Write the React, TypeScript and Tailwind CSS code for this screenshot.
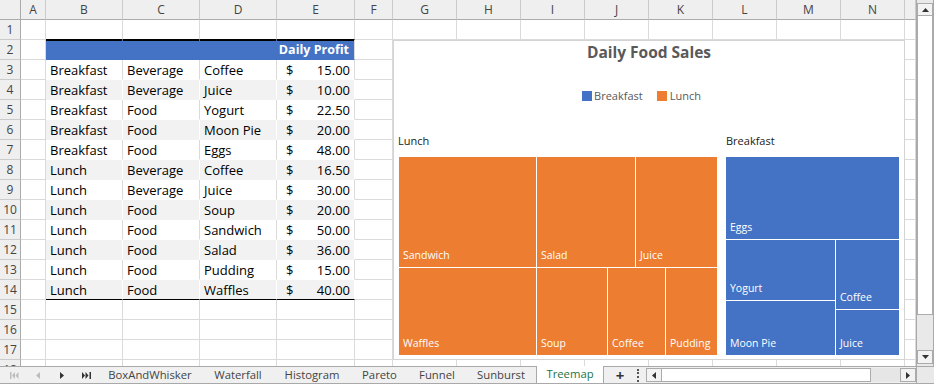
import React from "react"

const LETTERS = ["", "A", "B", "C", "D", "E", "F", "G", "H", "I", "J", "K", "L", "M", "N", ""]

const rows = [
  ["Breakfast", "Beverage", "Coffee", "15.00"],
  ["Breakfast", "Beverage", "Juice", "10.00"],
  ["Breakfast", "Food", "Yogurt", "22.50"],
  ["Breakfast", "Food", "Moon Pie", "20.00"],
  ["Breakfast", "Food", "Eggs", "48.00"],
  ["Lunch", "Beverage", "Coffee", "16.50"],
  ["Lunch", "Beverage", "Juice", "30.00"],
  ["Lunch", "Food", "Soup", "20.00"],
  ["Lunch", "Food", "Sandwich", "50.00"],
  ["Lunch", "Food", "Salad", "36.00"],
  ["Lunch", "Food", "Pudding", "15.00"],
  ["Lunch", "Food", "Waffles", "40.00"],
]

const tabs = [
  { name: "BoxAndWhisker", w: "w-[106px]" },
  { name: "Waterfall", w: "w-[70px]" },
  { name: "Histogram", w: "w-[78px]" },
  { name: "Pareto", w: "w-[57px]" },
  { name: "Funnel", w: "w-[58px]" },
  { name: "Sunburst", w: "w-[70px]" },
]

function Cell({ r, c }: { r: number; c: number }) {
  const inTable = c >= 2 && c <= 5
  if (inTable && r === 1) {
    return <div className="bg-white border-r border-r-[#dadada] border-b border-b-black" />
  }
  if (inTable && r === 2) {
    return (
      <div
        className={
          "bg-[#4472c4] border-b border-b-[#4472c4] shadow-[inset_0_1px_0_#000] flex items-end justify-end pr-[5px] " +
          (c === 5 ? "border-r border-r-[#dadada]" : "border-r border-r-[#4472c4]")
        }
      >
        {c === 5 && (
          <span className="text-white font-bold text-[12.5px] leading-[17px] pb-[1px] whitespace-nowrap">Daily Profit</span>
        )}
      </div>
    )
  }
  if (inTable && r >= 3 && r <= 14) {
    const d = rows[r - 3]
    const gray = r % 2 === 0
    const base = gray
      ? "bg-[#f2f2f2] border-r border-r-white border-b " + (r === 14 ? "border-b-black" : "border-b-[#f2f2f2]")
      : "bg-white border-r border-r-[#dadada] border-b border-b-white"
    if (c === 5) {
      return (
        <div className={base + " flex items-end justify-between pl-[9px] pr-[4px] text-[13px] leading-[17px] text-black"}>
          <span>$</span>
          <span>{d[3]}</span>
        </div>
      )
    }
    return (
      <div className={base + " flex items-end pl-[4px] text-[13px] leading-[17px] text-black whitespace-nowrap"}>
        <span>{d[c - 2]}</span>
      </div>
    )
  }
  return <div className="bg-white border-r border-b border-[#dadada]" />
}

function Sheet() {
  const cells: React.ReactNode[] = []
  LETTERS.forEach((l, i) =>
    cells.push(
      <div
        key={"h" + i}
        className={
          i === 0
            ? "bg-[#efefef] border-r border-r-[#ababab] border-b border-b-[#ababab]"
            : "bg-[#efefef] border-r border-r-[#cbcbcb] border-b border-b-[#ababab] flex items-center justify-center text-[12px] text-[#444]"
        }
      >
        {l}
      </div>
    )
  )
  for (let r = 1; r <= 18; r++) {
    cells.push(
      <div
        key={"r" + r}
        className="bg-[#efefef] border-r border-r-[#ababab] border-b border-b-[#cbcbcb] flex items-center justify-center text-[12px] text-[#444]"
      >
        {r}
      </div>
    )
    for (let c = 1; c <= 15; c++) cells.push(<Cell key={r + "-" + c} r={r} c={c} />)
  }
  return (
    <div className="relative h-[366px] w-[916px] overflow-hidden">
      <div className="grid grid-cols-[21px_25px_77px_77px_77px_78px_38px_repeat(8,64px)_11px] auto-rows-[20px]">
        {cells}
      </div>
      <Chart />
    </div>
  )
}

function Tile({ label, className }: { label: string; className: string }) {
  return (
    <div className={className + " flex items-end pl-[4px] pb-[5px] text-white text-[10.5px] leading-[14px] whitespace-nowrap overflow-hidden"}>
      {label}
    </div>
  )
}

function Chart() {
  return (
    <div className="absolute left-[393px] top-[40px] w-[512px] h-[320px] bg-white border border-[#d4d4d4] flex flex-col">
      <div className="pt-[1px] text-center text-[15.5px] font-bold leading-[20px] text-[#595959]">Daily Food Sales</div>
      <div className="mt-[27px] flex items-center justify-center pr-[15px] h-[14px] text-[11px] text-[#595959]">
        <span className="w-[10px] h-[10px] bg-[#4472c4] mr-[2px]" />
        <span>Breakfast</span>
        <span className="w-[10px] h-[10px] bg-[#ed7d31] ml-[14px] mr-[3px]" />
        <span>Lunch</span>
      </div>
      <div className="mt-[31px] flex pl-[5px] gap-[9px]">
        <div className="flex flex-col w-[318px]">
          <div className="h-[14px] text-[11px] leading-[14px] text-[#1a1a1a] -ml-[1px]">Lunch</div>
          <div className="mt-[9px] h-[198px] flex gap-px">
            <div className="w-[137px] flex flex-col gap-px">
              <Tile label="Sandwich" className="h-[110px] bg-[#ed7d31]" />
              <Tile label="Waffles" className="flex-1 bg-[#ed7d31]" />
            </div>
            <div className="flex-1 flex flex-col gap-px">
              <div className="h-[110px] flex gap-px">
                <Tile label="Salad" className="w-[98px] bg-[#ed7d31]" />
                <Tile label="Juice" className="flex-1 bg-[#ed7d31]" />
              </div>
              <div className="flex-1 flex gap-px">
                <Tile label="Soup" className="w-[70px] bg-[#ed7d31]" />
                <Tile label="Coffee" className="w-[57px] bg-[#ed7d31]" />
                <Tile label="Pudding" className="flex-1 bg-[#ed7d31]" />
              </div>
            </div>
          </div>
        </div>
        <div className="flex flex-col w-[173px]">
          <div className="h-[14px] text-[11px] leading-[14px] text-[#1a1a1a]">Breakfast</div>
          <div className="mt-[9px] h-[198px] flex flex-col gap-px">
            <Tile label="Eggs" className="h-[82px] bg-[#4472c4]" />
            <div className="flex-1 flex gap-px">
              <div className="w-[109px] flex flex-col gap-px">
                <Tile label="Yogurt" className="h-[60px] bg-[#4472c4]" />
                <Tile label="Moon Pie" className="flex-1 bg-[#4472c4]" />
              </div>
              <div className="flex-1 flex flex-col gap-px">
                <Tile label="Coffee" className="h-[69px] bg-[#4472c4]" />
                <Tile label="Juice" className="flex-1 bg-[#4472c4]" />
              </div>
            </div>
          </div>
        </div>
      </div>
    </div>
  )
}

function VScroll() {
  return (
    <div className="w-[18px] h-[366px] bg-[#e9e9e9] border-l border-l-[#a9a9a9] border-r border-r-[#a9a9a9] flex flex-col pt-[3px] pb-[2px]">
      <div className="h-[13px] border border-[#ababab] bg-[#f3f3f3] flex items-center justify-center">
        <svg width="7" height="4" viewBox="0 0 7 4"><path d="M3.5 0 L7 4 L0 4Z" fill="#333" /></svg>
      </div>
      <div className="h-[299px] border border-[#ababab] border-t-0 bg-white" />
      <div className="flex-1" />
      <div className="h-[14px] border border-[#ababab] bg-[#f3f3f3] flex items-center justify-center">
        <svg width="7" height="4" viewBox="0 0 7 4"><path d="M0 0 L7 0 L3.5 4Z" fill="#333" /></svg>
      </div>
    </div>
  )
}

function TabBar() {
  return (
    <div className="flex h-[18px] border-t border-t-[#a9a9a9] border-b border-b-[#a9a9a9] bg-[#f0f0f0]">
      <div className="w-[97px] flex items-center">
        <div className="w-[28px] flex justify-center">
          <svg width="9" height="7" viewBox="0 0 9 7" fill="#bdbdbd">
            <rect x="0" y="0" width="1.5" height="7" />
            <path d="M5 0 L2 3.5 L5 7Z M8.5 0 L5.5 3.5 L8.5 7Z" />
          </svg>
        </div>
        <div className="w-[20px] flex justify-center">
          <svg width="4" height="7" viewBox="0 0 4 7"><path d="M4 0 L0 3.5 L4 7Z" fill="#bdbdbd" /></svg>
        </div>
        <div className="w-[27px] flex justify-center">
          <svg width="4" height="7" viewBox="0 0 4 7"><path d="M0 0 L4 3.5 L0 7Z" fill="#333" /></svg>
        </div>
        <div className="w-[22px] flex justify-center">
          <svg width="9" height="7" viewBox="0 0 9 7" fill="#333">
            <path d="M0 0 L3 3.5 L0 7Z M3.5 0 L6.5 3.5 L3.5 7Z" />
            <rect x="7.5" y="0" width="1.5" height="7" />
          </svg>
        </div>
      </div>
      {tabs.map((t) => (
        <div key={t.name} className={t.w + " flex items-center justify-center text-[11.3px] text-[#444] whitespace-nowrap"}>
          {t.name}
        </div>
      ))}
      <div className="w-[68px] -mt-px bg-white border-x border-x-[#a9a9a9] flex items-center justify-center text-[11.3px] text-[#217346]">
        Treemap
      </div>
      <div className="w-[32px] flex items-center justify-center text-[15px] font-bold text-[#333] leading-none">+</div>
      <div className="w-[10px] flex items-center">
        <div className="ml-[1px] h-[13px] border-l-2 border-dotted border-l-[#555]" />
      </div>
      <div className="w-[270px] flex py-[1px]">
        <div className="w-[16px] border border-[#ababab] bg-[#f3f3f3] flex items-center justify-center">
          <svg width="4" height="7" viewBox="0 0 4 7"><path d="M4 0 L0 3.5 L4 7Z" fill="#333" /></svg>
        </div>
        <div className="w-[209px] border border-l-0 border-[#ababab] bg-white" />
        <div className="flex-1 bg-[#e6e6e6]" />
        <div className="w-[16px] border border-[#ababab] bg-[#f3f3f3] flex items-center justify-center">
          <svg width="4" height="7" viewBox="0 0 4 7"><path d="M0 0 L4 3.5 L0 7Z" fill="#333" /></svg>
        </div>
      </div>
      <div className="flex-1 bg-[#e9e9e9] border-l border-l-[#a9a9a9]" />
    </div>
  )
}

export default function App() {
  return (
    <div className="w-[934px] h-[384px] overflow-hidden bg-white font-['Open_Sans',sans-serif]">
      <div className="flex">
        <Sheet />
        <VScroll />
      </div>
      <TabBar />
    </div>
  )
}
